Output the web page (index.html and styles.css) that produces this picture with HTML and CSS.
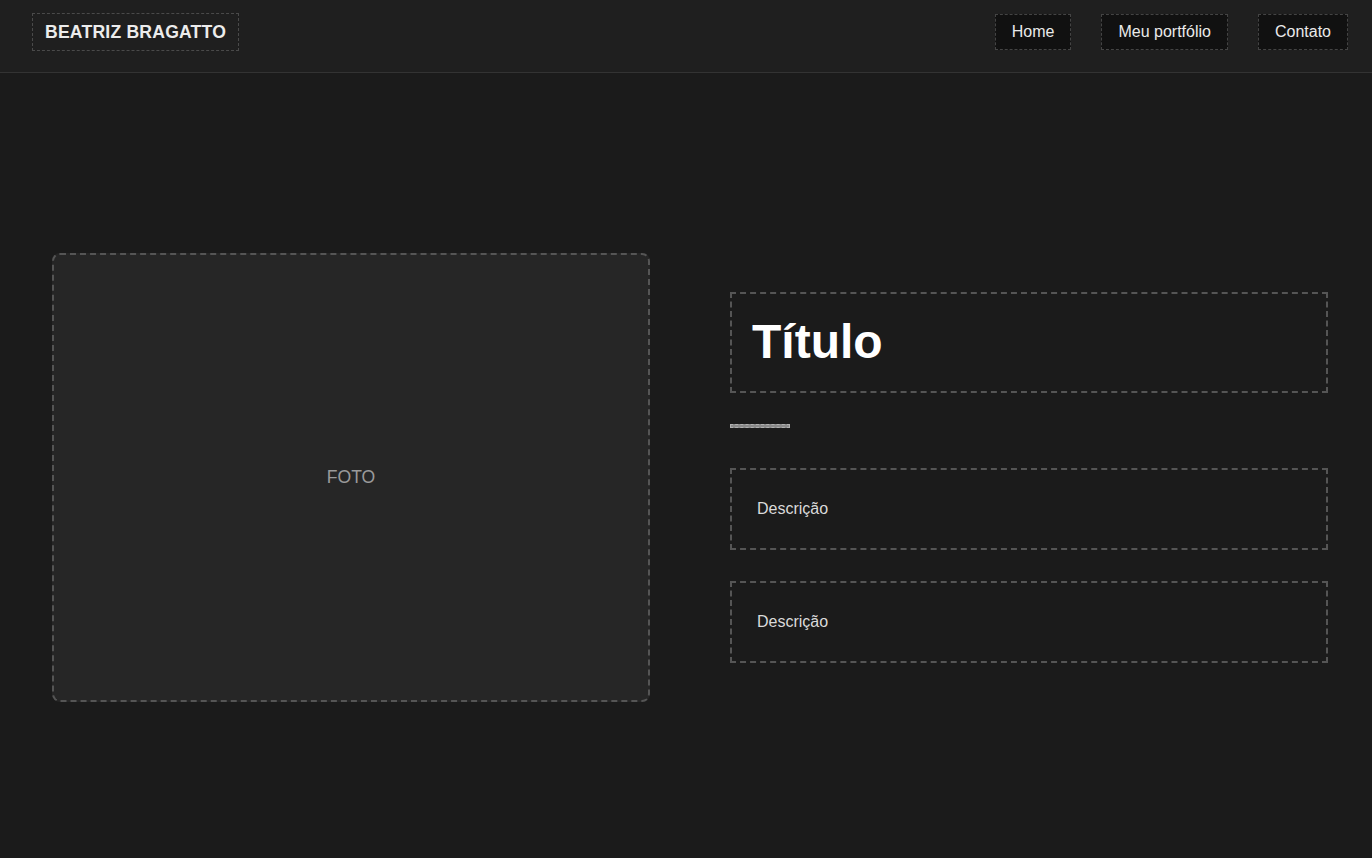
FILE: index.html
```html
<!DOCTYPE html>
<html lang="pt-BR">
<head>
<meta charset="utf-8">
<title>Beatriz Bragatto</title>
<link rel="stylesheet" href="styles.css">
</head>
<body>
<header class="topbar">
  <div class="logo">BEATRIZ BRAGATTO</div>
  <nav class="nav">
    <a class="nav-link" href="#">Home</a>
    <a class="nav-link" href="#">Meu portfólio</a>
    <a class="nav-link" href="#">Contato</a>
  </nav>
</header>
<main class="hero">
  <div class="photo">FOTO</div>
  <section class="info">
    <h1 class="title">Título</h1>
    <div class="divider"></div>
    <p class="desc">Descrição</p>
    <p class="desc">Descrição</p>
  </section>
</main>
</body>
</html>
```

FILE: styles.css
```css
* { box-sizing: border-box; }
html, body { margin: 0; padding: 0; }
body {
  background: #1b1b1b;
  color: #e6e6e6;
  font-family: "Liberation Sans", Arial, sans-serif;
  min-height: 858px;
}
.topbar {
  height: 73px;
  background: #1f1f1f;
  border-bottom: 1px solid #333;
  display: flex;
  align-items: center;
  justify-content: space-between;
  padding: 0 24px 8px 32px;
}
.logo {
  border: 1px dashed #4a4a4a;
  padding: 8px 12px;
  font-weight: bold;
  font-size: 17.6px;
  letter-spacing: 0.2px;
  line-height: 20px;
  color: #ececec;
  margin-top: -1px;
}
.nav {
  display: flex;
  gap: 30px;
  align-items: center;
}
.nav-link {
  display: block;
  background: #111;
  border: 1px dashed #444;
  padding: 8px 16px;
  font-size: 16px;
  line-height: 18px;
  color: #eaeaea;
  text-decoration: none;
}
.hero {
  display: flex;
  align-items: center;
  gap: 80px;
  padding: 180px 44px 0 52px;
}
.photo {
  flex: 0 0 598px;
  height: 449px;
  background: #262626;
  border: 2px dashed #555;
  border-radius: 8px;
  display: flex;
  align-items: center;
  justify-content: center;
  color: #9a9a9a;
  font-size: 17.6px;
}
.info {
  flex: 0 0 598px;
  display: flex;
  flex-direction: column;
}
.title {
  margin: 0;
  border: 2px dashed #555;
  padding: 18px 20px 20px;
  font-size: 48px;
  line-height: 59px;
  font-weight: bold;
  color: #fff;
}
.divider {
  width: 60px;
  height: 4px;
  background: #8a8a8a;
  border: 1px dashed #b0b0b0;
  margin: 31px 0 40px;
}
.desc {
  margin: 0 0 31px;
  border: 2px dashed #555;
  padding: 25px;
  font-size: 16px;
  line-height: 28px;
  color: #dadada;
}
.desc:last-child { margin-bottom: 0; }
```
